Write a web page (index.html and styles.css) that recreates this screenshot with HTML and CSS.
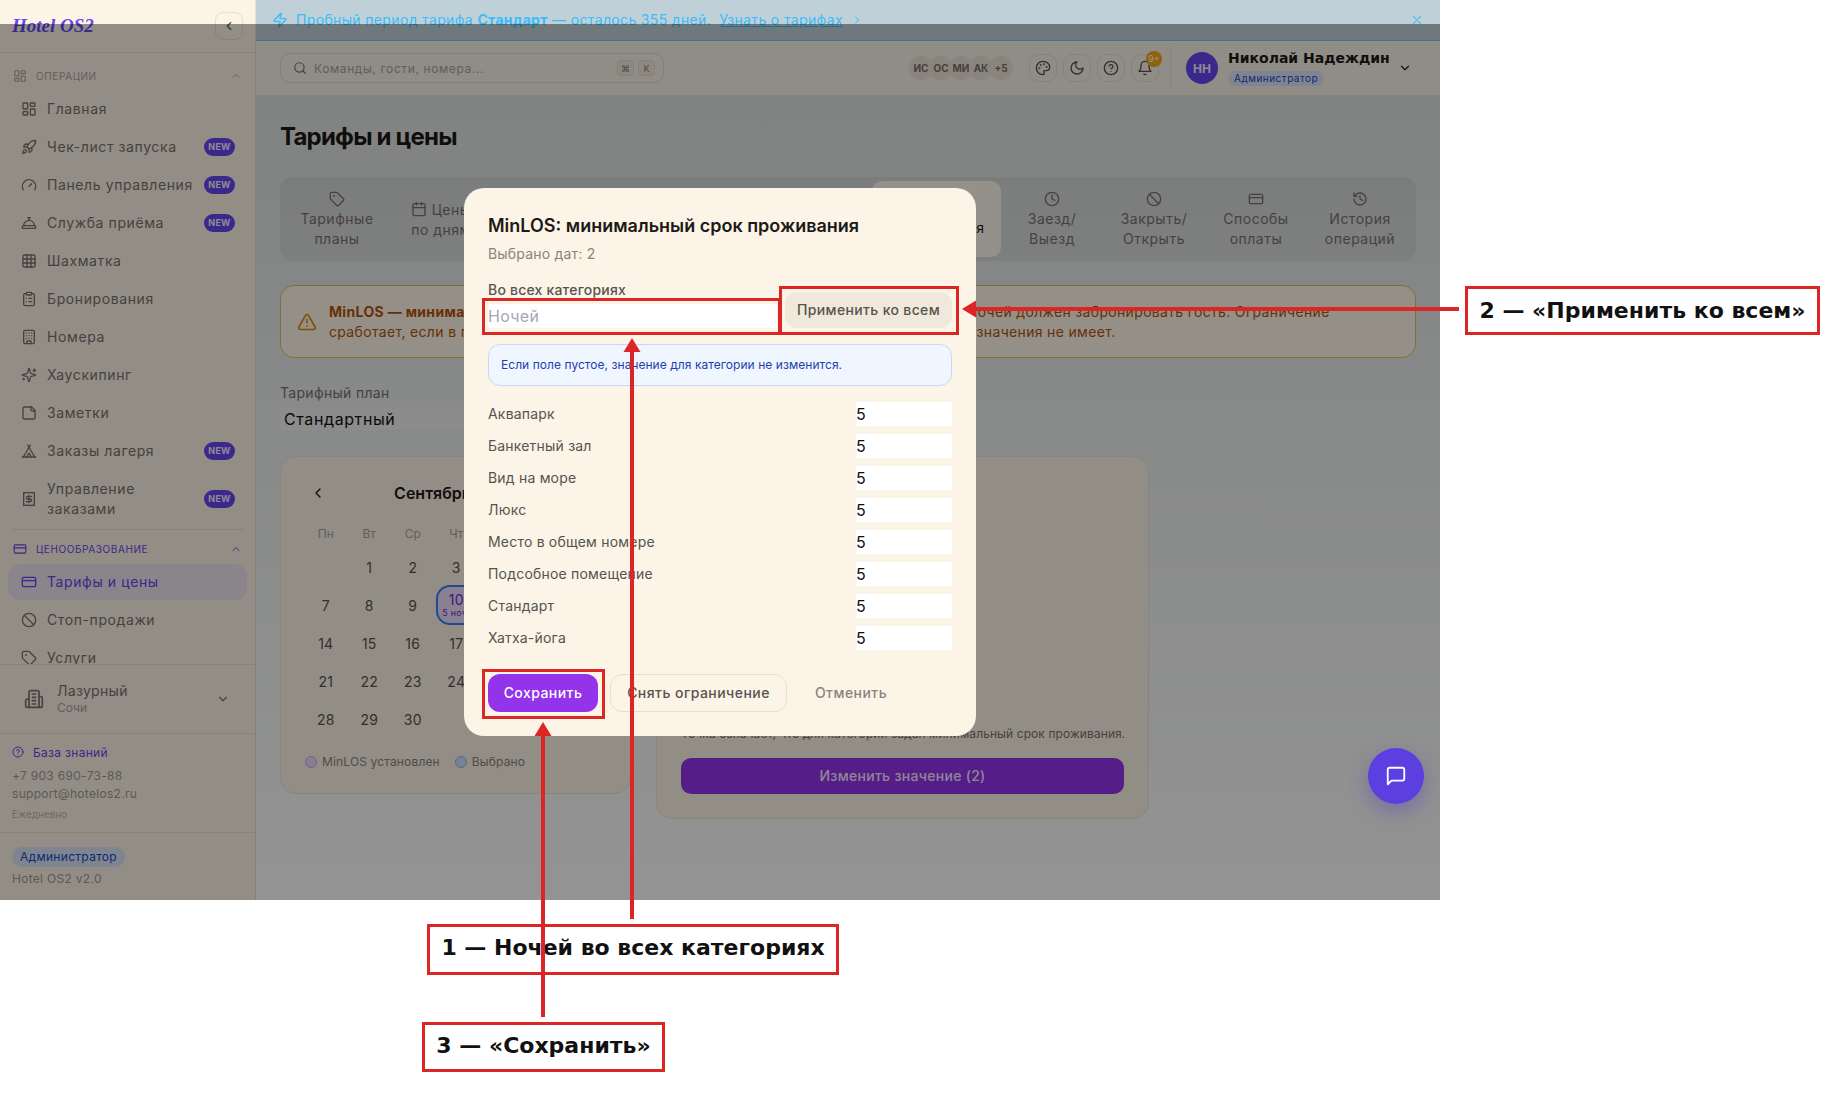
FILE: index.html
```html
<!DOCTYPE html>
<html lang="ru">
<head>
    <meta charset="UTF-8">
    <meta name="viewport" content="width=device-width, initial-scale=1.0">
    <title>Тарифы и цены</title>
    <link rel="stylesheet" href="styles.css">
</head>
<body>
    <svg class="sprite" xmlns="http://www.w3.org/2000/svg">
        <symbol id="i-dash" viewBox="0 0 24 24"><rect x="3" y="3" width="7" height="9" rx="1"/><rect x="14" y="3" width="7" height="5" rx="1"/><rect x="14" y="12" width="7" height="9" rx="1"/><rect x="3" y="16" width="7" height="5" rx="1"/></symbol>
        <symbol id="i-rocket" viewBox="0 0 24 24"><path d="M4.5 16.5c-1.5 1.26-2 5-2 5s3.74-.5 5-2c.71-.84.7-2.13-.09-2.91a2.18 2.18 0 0 0-2.91-.09z"/><path d="m12 15-3-3a22 22 0 0 1 2-3.95A12.88 12.88 0 0 1 22 2c0 2.72-.78 7.5-6 11a22.35 22.35 0 0 1-4 2z"/><path d="M9 12H4s.55-3.03 2-4c1.62-1.08 5 0 5 0"/><path d="M12 15v5s3.03-.55 4-2c1.08-1.62 0-5 0-5"/></symbol>
        <symbol id="i-gauge" viewBox="0 0 24 24"><path d="m12 14 4-4"/><path d="M3.34 19a10 10 0 1 1 17.32 0"/></symbol>
        <symbol id="i-bell-desk" viewBox="0 0 24 24"><path d="M3 20a1 1 0 0 1-1-1v-1a2 2 0 0 1 2-2h16a2 2 0 0 1 2 2v1a1 1 0 0 1-1 1Z"/><path d="M20 16a8 8 0 1 0-16 0"/><path d="M12 4v4"/><path d="M10 4h4"/></symbol>
        <symbol id="i-grid" viewBox="0 0 24 24"><rect x="3" y="3" width="18" height="18" rx="2"/><path d="M3 9h18M3 15h18M9 3v18M15 3v18"/></symbol>
        <symbol id="i-clipboard" viewBox="0 0 24 24"><rect x="8" y="2" width="8" height="4" rx="1"/><path d="M16 4h2a2 2 0 0 1 2 2v14a2 2 0 0 1-2 2H6a2 2 0 0 1-2-2V6a2 2 0 0 1 2-2h2"/><path d="M12 11h4M12 16h4M8 11h.01M8 16h.01"/></symbol>
        <symbol id="i-hotel" viewBox="0 0 24 24"><rect x="4" y="2" width="16" height="20" rx="2"/><path d="M9 22v-4h6v4"/><path d="M8 6h.01M16 6h.01M12 6h.01M12 10h.01M12 14h.01M16 10h.01M16 14h.01M8 10h.01M8 14h.01"/></symbol>
        <symbol id="i-sparkles" viewBox="0 0 24 24"><path d="M9.937 15.5A2 2 0 0 0 8.5 14.063l-6.135-1.582a.5.5 0 0 1 0-.962L8.5 9.936A2 2 0 0 0 9.937 8.5l1.582-6.135a.5.5 0 0 1 .963 0L14.063 8.5A2 2 0 0 0 15.5 9.937l6.135 1.581a.5.5 0 0 1 0 .964L15.5 14.063a2 2 0 0 0-1.437 1.437l-1.582 6.135a.5.5 0 0 1-.963 0z"/><path d="M20 3v4M22 5h-4M4 17v2M5 18H3"/></symbol>
        <symbol id="i-note" viewBox="0 0 24 24"><path d="M16 3H5a2 2 0 0 0-2 2v14a2 2 0 0 0 2 2h14a2 2 0 0 0 2-2V8Z"/><path d="M15 3v4a2 2 0 0 0 2 2h4"/></symbol>
        <symbol id="i-tent" viewBox="0 0 24 24"><path d="M3.5 21 14 3"/><path d="M20.5 21 10 3"/><path d="M15.5 21 12 15l-3.5 6"/><path d="M2 21h20"/></symbol>
        <symbol id="i-receipt" viewBox="0 0 24 24"><path d="M4 2v20l2-1 2 1 2-1 2 1 2-1 2 1 2-1 2 1V2l-2 1-2-1-2 1-2-1-2 1-2-1-2 1Z"/><path d="M16 8h-6a2 2 0 1 0 0 4h4a2 2 0 1 1 0 4H8"/><path d="M12 17.5v-11"/></symbol>
        <symbol id="i-card" viewBox="0 0 24 24"><rect x="2" y="5" width="20" height="14" rx="2"/><path d="M2 10h20"/></symbol>
        <symbol id="i-ban" viewBox="0 0 24 24"><circle cx="12" cy="12" r="10"/><path d="m4.9 4.9 14.2 14.2"/></symbol>
        <symbol id="i-tag" viewBox="0 0 24 24"><path d="M12.586 2.586A2 2 0 0 0 11.172 2H4a2 2 0 0 0-2 2v7.172a2 2 0 0 0 .586 1.414l8.704 8.704a2.426 2.426 0 0 0 3.42 0l6.58-6.58a2.426 2.426 0 0 0 0-3.42z"/><circle cx="7.5" cy="7.5" r=".5"/></symbol>
        <symbol id="i-building" viewBox="0 0 24 24"><path d="M6 22V4a2 2 0 0 1 2-2h8a2 2 0 0 1 2 2v18Z"/><path d="M6 12H4a2 2 0 0 0-2 2v6a2 2 0 0 0 2 2h2"/><path d="M18 9h2a2 2 0 0 1 2 2v9a2 2 0 0 1-2 2h-2"/><path d="M10 6h4M10 10h4M10 14h4M10 18h4"/></symbol>
        <symbol id="i-help" viewBox="0 0 24 24"><circle cx="12" cy="12" r="10"/><path d="M9.09 9a3 3 0 0 1 5.83 1c0 2-3 3-3 3"/><path d="M12 17h.01"/></symbol>
        <symbol id="i-palette" viewBox="0 0 24 24"><path d="M12 22a1 1 0 0 1 0-20 10 9 0 0 1 10 9 5 5 0 0 1-5 5h-2.25a1.75 1.75 0 0 0-1.4 2.8l.3.4a1.75 1.75 0 0 1-1.4 2.8z"/><circle cx="13.5" cy="6.5" r=".5"/><circle cx="17.5" cy="10.5" r=".5"/><circle cx="6.5" cy="12.5" r=".5"/><circle cx="8.5" cy="7.5" r=".5"/></symbol>
        <symbol id="i-moon" viewBox="0 0 24 24"><path d="M12 3a6 6 0 0 0 9 9 9 9 0 1 1-9-9Z"/></symbol>
        <symbol id="i-bell" viewBox="0 0 24 24"><path d="M6 8a6 6 0 0 1 12 0c0 7 3 9 3 9H3s3-2 3-9"/><path d="M10.3 21a1.94 1.94 0 0 0 3.4 0"/></symbol>
        <symbol id="i-search" viewBox="0 0 24 24"><circle cx="11" cy="11" r="8"/><path d="m21 21-4.3-4.3"/></symbol>
        <symbol id="i-zap" viewBox="0 0 24 24"><path d="M4 14a1 1 0 0 1-.78-1.63l9.9-10.2a.5.5 0 0 1 .86.46l-1.92 6.02A1 1 0 0 0 13 10h7a1 1 0 0 1 .78 1.63l-9.9 10.2a.5.5 0 0 1-.86-.46l1.92-6.02A1 1 0 0 0 11 14z"/></symbol>
        <symbol id="i-alert" viewBox="0 0 24 24"><path d="m21.73 18-8-14a2 2 0 0 0-3.48 0l-8 14A2 2 0 0 0 4 21h16a2 2 0 0 0 1.73-3"/><path d="M12 9v4"/><path d="M12 17h.01"/></symbol>
        <symbol id="i-clock" viewBox="0 0 24 24"><circle cx="12" cy="12" r="10"/><path d="M12 6v6l4 2"/></symbol>
        <symbol id="i-history" viewBox="0 0 24 24"><path d="M3 12a9 9 0 1 0 9-9 9.75 9.75 0 0 0-6.74 2.74L3 8"/><path d="M3 3v5h5"/><path d="M12 7v5l4 2"/></symbol>
        <symbol id="i-calendar" viewBox="0 0 24 24"><path d="M8 2v4M16 2v4"/><rect x="3" y="4" width="18" height="18" rx="2"/><path d="M3 10h18"/></symbol>
        <symbol id="i-chat" viewBox="0 0 24 24"><path d="M21 15a2 2 0 0 1-2 2H7l-4 4V5a2 2 0 0 1 2-2h14a2 2 0 0 1 2 2z"/></symbol>
        <symbol id="i-left" viewBox="0 0 24 24"><path d="m15 18-6-6 6-6"/></symbol>
        <symbol id="i-right" viewBox="0 0 24 24"><path d="m9 18 6-6-6-6"/></symbol>
        <symbol id="i-up" viewBox="0 0 24 24"><path d="m18 15-6-6-6 6"/></symbol>
        <symbol id="i-down" viewBox="0 0 24 24"><path d="m6 9 6 6 6-6"/></symbol>
        <symbol id="i-x" viewBox="0 0 24 24"><path d="M18 6 6 18M6 6l12 12"/></symbol>
    </svg>

    <div class="shot">
        <aside class="sidebar">
            <div class="brand">
                <span class="brand-name">Hotel OS2</span>
                <button class="collapse-btn"><svg class="ico ico-14"><use href="#i-left"/></svg></button>
            </div>

            <nav class="nav">
                <div class="group-head">
                    <svg class="ico ico-14"><use href="#i-dash"/></svg>
                    <span>ОПЕРАЦИИ</span>
                    <svg class="ico ico-12 group-chev"><use href="#i-up"/></svg>
                </div>
                <a class="nav-item"><svg class="ico"><use href="#i-dash"/></svg><span class="nav-text">Главная</span></a>
                <a class="nav-item"><svg class="ico"><use href="#i-rocket"/></svg><span class="nav-text">Чек-лист запуска</span><b class="new">NEW</b></a>
                <a class="nav-item"><svg class="ico"><use href="#i-gauge"/></svg><span class="nav-text">Панель управления</span><b class="new">NEW</b></a>
                <a class="nav-item"><svg class="ico"><use href="#i-bell-desk"/></svg><span class="nav-text">Служба приёма</span><b class="new">NEW</b></a>
                <a class="nav-item"><svg class="ico"><use href="#i-grid"/></svg><span class="nav-text">Шахматка</span></a>
                <a class="nav-item"><svg class="ico"><use href="#i-clipboard"/></svg><span class="nav-text">Бронирования</span></a>
                <a class="nav-item"><svg class="ico"><use href="#i-hotel"/></svg><span class="nav-text">Номера</span></a>
                <a class="nav-item"><svg class="ico"><use href="#i-sparkles"/></svg><span class="nav-text">Хаускипинг</span></a>
                <a class="nav-item"><svg class="ico"><use href="#i-note"/></svg><span class="nav-text">Заметки</span></a>
                <a class="nav-item"><svg class="ico"><use href="#i-tent"/></svg><span class="nav-text">Заказы лагеря</span><b class="new">NEW</b></a>
                <a class="nav-item nav-item-tall"><svg class="ico"><use href="#i-receipt"/></svg><span class="nav-text">Управление<br>заказами</span><b class="new">NEW</b></a>

                <div class="group-head group-head-active">
                    <svg class="ico ico-14"><use href="#i-card"/></svg>
                    <span>ЦЕНООБРАЗОВАНИЕ</span>
                    <svg class="ico ico-12 group-chev"><use href="#i-up"/></svg>
                </div>
                <a class="nav-item nav-item-active"><svg class="ico"><use href="#i-card"/></svg><span class="nav-text">Тарифы и цены</span></a>
                <a class="nav-item"><svg class="ico"><use href="#i-ban"/></svg><span class="nav-text">Стоп-продажи</span></a>
                <a class="nav-item"><svg class="ico"><use href="#i-tag"/></svg><span class="nav-text">Услуги</span></a>
            </nav>

            <div class="property">
                <svg class="ico ico-20"><use href="#i-building"/></svg>
                <div class="property-text">
                    <div class="property-name">Лазурный</div>
                    <div class="property-city">Сочи</div>
                </div>
                <svg class="ico ico-14"><use href="#i-down"/></svg>
            </div>

            <div class="support">
                <div class="support-link"><svg class="ico ico-12"><use href="#i-help"/></svg>База знаний</div>
                <div class="support-line">+7 903 690-73-88</div>
                <div class="support-line">support@hotelos2.ru</div>
                <div class="support-small">Ежедневно</div>
            </div>

            <div class="side-foot">
                <span class="role-pill">Администратор</span>
                <div class="version">Hotel OS2 v2.0</div>
            </div>
        </aside>

        <div class="workspace">
            <div class="banner">
                <svg class="ico"><use href="#i-zap"/></svg>
                <span>Пробный период тарифа <b>Стандарт</b> — осталось 355 дней.</span>
                <a class="banner-link">Узнать о тарифах</a>
                <svg class="ico ico-12"><use href="#i-right"/></svg>
                <svg class="ico ico-14 banner-close"><use href="#i-x"/></svg>
            </div>

            <header class="topbar">
                <div class="search">
                    <svg class="ico ico-14"><use href="#i-search"/></svg>
                    <span class="search-text">Команды, гости, номера...</span>
                    <kbd>⌘</kbd><kbd>K</kbd>
                </div>
                <div class="people">
                    <span class="person">ИС</span><span class="person">ОС</span><span class="person">МИ</span><span class="person">АК</span><span class="person">+5</span>
                </div>
                <div class="tools">
                    <button class="tool"><svg class="ico"><use href="#i-palette"/></svg></button>
                    <button class="tool"><svg class="ico"><use href="#i-moon"/></svg></button>
                    <button class="tool"><svg class="ico"><use href="#i-help"/></svg></button>
                    <button class="tool"><svg class="ico"><use href="#i-bell"/></svg><span class="tool-badge">9+</span></button>
                </div>
                <div class="user">
                    <span class="user-avatar">НН</span>
                    <div class="user-text">
                        <div class="user-name">Николай Надеждин</div>
                        <span class="user-role">Администратор</span>
                    </div>
                    <svg class="ico ico-14"><use href="#i-down"/></svg>
                </div>
            </header>

            <main class="content">
                <h1>Тарифы и цены</h1>

                <div class="tabs">
                    <div class="tab tab-first"><svg class="ico"><use href="#i-tag"/></svg>Тарифные<br>планы</div>
                    <div class="tab tab-inline"><span><svg class="ico"><use href="#i-calendar"/></svg> Цены<br>по дням</span></div>
                    <div class="tab-gap"></div>
                    <div class="tab tab-active"><svg class="ico"><use href="#i-clock"/></svg>Ограничения</div>
                    <div class="tab"><svg class="ico"><use href="#i-clock"/></svg>Заезд/<br>Выезд</div>
                    <div class="tab"><svg class="ico"><use href="#i-ban"/></svg>Закрыть/<br>Открыть</div>
                    <div class="tab"><svg class="ico"><use href="#i-card"/></svg>Способы<br>оплаты</div>
                    <div class="tab tab-last"><svg class="ico"><use href="#i-history"/></svg>История<br>операций</div>
                </div>

                <div class="alert">
                    <svg class="ico ico-20"><use href="#i-alert"/></svg>
                    <p><b>MinLOS — минимальный срок проживания.</b> Говорит, сколько минимум подряд идущих ночей должен забронировать гость. Ограничение<br>сработает, если в период проживания попадает выбранная дата заезда, остальные даты значения не имеет.</p>
                </div>

                <label class="plan-label">Тарифный план</label>
                <div class="plan-select">Стандартный</div>

                <div class="panels">
                    <section class="card calendar">
                        <div class="cal-head">
                            <svg class="ico"><use href="#i-left"/></svg>
                            <span>Сентябрь 2026</span>
                            <svg class="ico"><use href="#i-right"/></svg>
                        </div>
                        <div class="cal-grid">
                            <span class="wd">Пн</span><span class="wd">Вт</span><span class="wd">Ср</span><span class="wd">Чт</span><span class="wd">Пт</span><span class="wd">Сб</span><span class="wd">Вс</span>
                            <span class="day"></span><span class="day">1</span><span class="day">2</span><span class="day">3</span><span class="day">4</span><span class="day">5</span><span class="day">6</span>
                            <span class="day">7</span><span class="day">8</span><span class="day">9</span><span class="day day-set">10<small>5 ноч.</small></span><span class="day">11</span><span class="day">12</span><span class="day">13</span>
                            <span class="day">14</span><span class="day">15</span><span class="day">16</span><span class="day">17</span><span class="day">18</span><span class="day">19</span><span class="day">20</span>
                            <span class="day">21</span><span class="day">22</span><span class="day">23</span><span class="day">24</span><span class="day">25</span><span class="day">26</span><span class="day">27</span>
                            <span class="day">28</span><span class="day">29</span><span class="day">30</span>
                        </div>
                        <div class="legend">
                            <span class="dot dot-purple"></span><span>MinLOS установлен</span>
                            <span class="dot dot-blue"></span><span>Выбрано</span>
                        </div>
                    </section>

                    <section class="card side-panel">
                        <p class="hint">Точка означает, что для категории задан минимальный срок проживания.</p>
                        <button class="change-btn">Изменить значение (2)</button>
                    </section>
                </div>
            </main>
        </div>

        <div class="overlay">
            <div class="modal">
                <h2>MinLOS: минимальный срок проживания</h2>
                <p class="modal-sub">Выбрано дат: 2</p>

                <div class="apply-row">
                    <div class="apply-field">
                        <label>Во всех категориях</label>
                        <input class="num" type="number" placeholder="Ночей">
                    </div>
                    <button class="apply-btn">Применить ко всем</button>
                </div>

                <div class="info">Если поле пустое, значение для категории не изменится.</div>

                <div class="cat-list">
                    <div class="cat"><span>Аквапарк</span><input class="num" type="number" value="5"></div>
                    <div class="cat"><span>Банкетный зал</span><input class="num" type="number" value="5"></div>
                    <div class="cat"><span>Вид на море</span><input class="num" type="number" value="5"></div>
                    <div class="cat"><span>Люкс</span><input class="num" type="number" value="5"></div>
                    <div class="cat"><span>Место в общем номере</span><input class="num" type="number" value="5"></div>
                    <div class="cat"><span>Подсобное помещение</span><input class="num" type="number" value="5"></div>
                    <div class="cat"><span>Стандарт</span><input class="num" type="number" value="5"></div>
                    <div class="cat"><span>Хатха-йога</span><input class="num" type="number" value="5"></div>
                </div>

                <div class="modal-actions">
                    <button class="btn-save">Сохранить</button>
                    <button class="btn-clear">Снять ограничение</button>
                    <button class="btn-cancel">Отменить</button>
                </div>
            </div>
        </div>

        <button class="chat-fab"><svg class="ico ico-22"><use href="#i-chat"/></svg></button>
    </div>

    <!-- пометки поверх скриншота -->
    <div class="mark mark-input"></div>
    <div class="mark mark-apply"></div>
    <div class="mark mark-save"></div>
    <div class="note note-1">1 — Ночей во всех категориях</div>
    <div class="note note-2">2 — «Применить ко всем»</div>
    <div class="note note-3">3 — «Сохранить»</div>
    <svg class="arrows" width="1842" height="1095" viewBox="0 0 1842 1095" xmlns="http://www.w3.org/2000/svg">
        <path d="M630 919V352h4v567z"/><path d="M632 338l8.5 14h-17z"/>
        <path d="M541 1017V736h4v281z"/><path d="M543 722l8.5 14h-17z"/>
        <path d="M1459 307H976v4h483z"/><path d="M962 309l14-8.5v17z"/>
    </svg>
</body>
</html>
```

FILE: styles.css
```css
* {
    box-sizing: border-box;
}
body {
    margin: 0;
    height: 1095px;
    position: relative;
    overflow: hidden;
    background-color: #fff;
    font-family: Inter, "Noto Sans", sans-serif;
    font-size: 14px;
    color: #1c1917;
}
button {
    font-family: inherit;
    cursor: pointer;
}
.sprite {
    display: none;
}
.ico {
    width: 16px;
    height: 16px;
    flex: none;
    fill: none;
    stroke: currentColor;
    stroke-width: 2;
    stroke-linecap: round;
    stroke-linejoin: round;
}
.ico-12 { width: 12px; height: 12px; }
.ico-14 { width: 14px; height: 14px; }
.ico-20 { width: 20px; height: 20px; }
.ico-22 { width: 22px; height: 22px; }

.shot {
    width: 1440px;
    height: 900px;
    position: relative;
    overflow: hidden;
    display: flex;
}

/* боковая панель */
.sidebar {
    width: 256px;
    flex: none;
    display: flex;
    flex-direction: column;
    background-color: #fbf4e7;
    border-right: 1px solid #e8dfd0;
    color: #78716c;
}
.brand {
    height: 53px;
    flex: none;
    display: flex;
    align-items: center;
    justify-content: space-between;
    padding: 0 12px;
    border-bottom: 1px solid #e8dfd0;
}
.brand-name {
    font-family: "Liberation Serif", serif;
    font-weight: bold;
    font-style: italic;
    font-size: 19px;
    color: #6746f0;
}
.collapse-btn {
    width: 28px;
    height: 28px;
    display: flex;
    align-items: center;
    justify-content: center;
    padding: 0;
    background: transparent;
    color: #57534e;
    border: 1px solid #e8dfd0;
    border-radius: 8px;
}
.nav {
    flex: 1;
    min-height: 0;
    overflow: hidden;
    padding: 11px 8px 0;
}
.group-head {
    height: 24px;
    margin-bottom: 3px;
    display: flex;
    align-items: center;
    gap: 9px;
    padding: 0 5px;
    font-size: 10px;
    letter-spacing: 0.6px;
    color: #a8a29e;
}
.group-chev {
    margin-left: auto;
}
.group-head-active {
    margin-top: 10px;
    color: #6746f0;
    position: relative;
}
.group-head-active::before {
    content: "";
    position: absolute;
    left: 4px;
    right: 3px;
    top: -8px;
    border-top: 1px solid #e8dfd0;
}
.nav-item {
    min-height: 36px;
    margin-bottom: 2px;
    display: flex;
    align-items: center;
    gap: 10px;
    padding: 0 12px 0 13px;
    border-radius: 12px;
    line-height: 20px;
    color: #78716c;
}
.nav-text {
    letter-spacing: 0.6px;
}
.nav-item-tall {
    min-height: 56px;
}
.nav-item-active {
    background-color: #ece5ee;
    color: #6746f0;
}
.new {
    margin-left: auto;
    width: 31px;
    height: 18px;
    display: flex;
    align-items: center;
    justify-content: center;
    border-radius: 9px;
    background-color: #6746f0;
    color: #f2eefe;
    font-size: 9px;
    letter-spacing: 0.2px;
}
.property {
    height: 69px;
    flex: none;
    display: flex;
    align-items: center;
    padding: 0 25px 0 24px;
    border-top: 1px solid #e8dfd0;
    color: #78716c;
}
.property-text {
    flex: 1;
    margin-left: 13px;
}
.property-name {
    font-size: 14px;
    line-height: 18px;
    letter-spacing: 0.3px;
}
.property-city {
    font-size: 12px;
    line-height: 16px;
    color: #a8a29e;
}
.support {
    height: 99px;
    flex: none;
    padding: 9px 12px 0;
    border-top: 1px solid #e8dfd0;
    font-size: 12px;
    color: #a09a92;
}
.support-link {
    display: flex;
    align-items: center;
    gap: 9px;
    height: 18px;
    color: #6746f0;
    letter-spacing: 0.3px;
}
.support-line {
    line-height: 18px;
    letter-spacing: 0.3px;
}
.support-link + .support-line {
    margin-top: 6px;
}
.support-small {
    margin-top: 3px;
    font-size: 10px;
    line-height: 16px;
    color: #bdb6ab;
}
.side-foot {
    height: 68px;
    flex: none;
    padding: 14px 12px 0;
    border-top: 1px solid #e8dfd0;
    font-size: 12px;
}
.role-pill {
    display: inline-block;
    height: 20px;
    padding: 0 8px;
    line-height: 20px;
    border-radius: 10px;
    background-color: #dbe6f8;
    color: #2246c4;
    letter-spacing: 0.3px;
}
.version {
    margin-top: 3px;
    line-height: 18px;
    color: #a09a92;
    letter-spacing: 0.3px;
}

/* правая часть */
.workspace {
    flex: 1;
    min-width: 0;
    display: flex;
    flex-direction: column;
    background: linear-gradient(180deg, #dadede 0%, #fefefe 100%);
}
.banner {
    height: 41px;
    flex: none;
    display: flex;
    align-items: center;
    gap: 8px;
    padding: 0 16px 1px 16px;
    background-color: #c0d0d8;
    border-bottom: 1px solid #7cc3e6;
    color: #38bdf8;
    font-size: 14px;
    letter-spacing: 0.35px;
}
.banner-link {
    text-decoration: underline;
}
.banner-close {
    margin-left: auto;
    opacity: 0.8;
}
.topbar {
    height: 55px;
    flex: none;
    display: flex;
    align-items: center;
    padding: 0 24px;
    background-color: #f9f2e7;
    border-bottom: 1px solid #ece3d4;
}
.search {
    width: 384px;
    height: 30px;
    display: flex;
    align-items: center;
    padding: 0 8px 0 12px;
    border: 1px solid #e0d8ca;
    border-radius: 10px;
    color: #78716c;
}
.search-text {
    flex: 1;
    margin-left: 7px;
    font-size: 12px;
    letter-spacing: 0.6px;
    color: #a8a29e;
}
kbd {
    width: 17px;
    height: 16px;
    margin-left: 4px;
    display: flex;
    align-items: center;
    justify-content: center;
    font-family: inherit;
    font-size: 9px;
    border: 1px solid #e8dfd0;
    border-radius: 4px;
    background-color: #f3ecdf;
    color: #8a847b;
}
.people {
    margin-left: auto;
    display: flex;
    margin-right: 16px;
}
.person {
    width: 24px;
    height: 24px;
    margin-left: -4px;
    display: flex;
    align-items: center;
    justify-content: center;
    border-radius: 50%;
    background-color: #ece4d6;
    color: #78716c;
    font-size: 10px;
    font-weight: 700;
    overflow: hidden;
}
.tools {
    display: flex;
    gap: 6px;
    height: 45px;
    align-items: center;
    padding-right: 11px;
    border-right: 1px solid #ece3d4;
}
.tool {
    width: 28px;
    height: 28px;
    position: relative;
    display: flex;
    align-items: center;
    justify-content: center;
    padding: 0;
    background: transparent;
    color: #57534e;
    border: 1px solid #e8dfd0;
    border-radius: 10px;
}
.tool-badge {
    position: absolute;
    top: -4px;
    right: -4px;
    width: 16px;
    height: 16px;
    border-radius: 50%;
    background-color: #f9a513;
    color: #fff;
    font-size: 9px;
    line-height: 16px;
    text-align: center;
}
.user {
    width: 230px;
    flex: none;
    display: flex;
    align-items: center;
    margin-left: 15px;
    padding-right: 4px;
}
.user-avatar {
    width: 32px;
    height: 32px;
    display: flex;
    align-items: center;
    justify-content: center;
    border-radius: 50%;
    background-color: #6746f0;
    color: #f0ecfd;
    font-size: 12px;
    font-weight: 700;
}
.user-text {
    margin-left: 10px;
    flex: 1;
}
.user-name {
    font-family: "DejaVu Sans", sans-serif;
    font-size: 14px;
    font-weight: 700;
    line-height: 16px;
    margin-bottom: 2px;
    color: #1c1917;
}
.user-role {
    display: inline-block;
    height: 15px;
    padding: 0 6px;
    line-height: 15px;
    font-size: 10px;
    letter-spacing: 0.5px;
    border-radius: 8px;
    background-color: #dbe6f8;
    color: #2246c4;
}
.content {
    flex: 1;
    padding: 25px 24px 0;
    min-height: 0;
}
h1 {
    margin: 0 0 24px;
    font-size: 24px;
    line-height: 32px;
    font-weight: 700;
    letter-spacing: -0.8px;
    color: #1c1917;
}
.tabs {
    height: 84px;
    display: flex;
    padding: 4px 3px 4px 4px;
    border-radius: 12px;
    background-color: rgba(0, 0, 0, 0.05);
    color: #78716c;
}
.tab {
    width: 102px;
    flex: none;
    display: flex;
    flex-direction: column;
    align-items: center;
    justify-content: center;
    text-align: center;
    line-height: 20px;
    letter-spacing: 0.5px;
    gap: 2px;
    padding-top: 2px;
}
.tab-first {
    width: 106px;
}
.tab-inline .ico {
    vertical-align: -2px;
}
.tab-gap {
    flex: 1;
}
.tab-active {
    width: 129px;
    border-radius: 10px;
    background-color: #fff8ee;
    color: #1c1917;
    justify-content: flex-start;
    padding-top: 19px;
}
.tab-last {
    width: 106px;
}
.alert {
    height: 73px;
    margin-top: 24px;
    display: flex;
    align-items: center;
    gap: 12px;
    padding: 0 16px;
    border: 1px solid #e0c060;
    border-radius: 14px;
    background-color: #fff9e8;
    color: #b45309;
}
.alert .ico {
    color: #e08a0a;
}
.alert p {
    margin: 0;
    line-height: 20px;
    letter-spacing: 0.33px;
    white-space: nowrap;
}
.plan-label {
    display: block;
    margin-top: 25px;
    line-height: 20px;
    letter-spacing: 0.3px;
    color: #78716c;
}
.plan-select {
    width: 400px;
    height: 22px;
    margin-top: 5px;
    padding: 0 4px;
    font-size: 16px;
    line-height: 22px;
    letter-spacing: 0.6px;
    background-color: #f2f2f2;
    color: #111;
}
.panels {
    margin-top: 26px;
    display: flex;
    align-items: flex-start;
    gap: 25px;
}
.card {
    background-color: #fbf4e7;
    border: 1px solid #eee4d2;
    border-radius: 16px;
    padding: 24px;
}
.calendar {
    width: 351px;
    height: 338px;
}
.cal-head {
    height: 24px;
    display: flex;
    align-items: center;
    justify-content: space-between;
    padding: 0 6px 0 5px;
    font-size: 16px;
    font-weight: 600;
}
.cal-grid {
    margin-top: 19px;
    display: grid;
    grid-template-columns: repeat(7, 41.5px);
    grid-template-rows: 23px repeat(5, 36px);
    gap: 2px;
    text-align: center;
}
.wd {
    height: 20px;
    font-size: 12px;
    line-height: 20px;
    color: #a8a29e;
}
.day {
    justify-self: center;
    width: 36px;
    height: 36px;
    display: flex;
    flex-direction: column;
    align-items: center;
    justify-content: center;
    color: #57534e;
    letter-spacing: 0.2px;
}
.day-set {
    background-color: #ecdffb;
    border-radius: 12px;
    box-shadow: 0 0 0 2px #3b82f6;
    color: #7e22ce;
    line-height: 16px;
    white-space: nowrap;
}
.day-set small {
    font-size: 9px;
    line-height: 10px;
}
.legend {
    margin-top: 17px;
    display: flex;
    align-items: center;
    gap: 5px;
    font-size: 12px;
    letter-spacing: 0.15px;
    color: #8a847b;
}
.dot {
    width: 12px;
    height: 12px;
    border-radius: 50%;
}
.dot + span + .dot {
    margin-left: 10px;
}
.dot-purple {
    background-color: #ead9f8;
    border: 1px solid #c9a8ee;
}
.dot-blue {
    background-color: #cfe0fb;
    border: 1px solid #93b8f5;
}
.side-panel {
    width: 493px;
    height: 363px;
    display: flex;
    flex-direction: column;
    justify-content: flex-end;
}
.hint {
    margin: 0 0 16px;
    font-size: 12px;
    line-height: 16px;
    letter-spacing: 0.09px;
    color: #78716c;
    white-space: nowrap;
}
.change-btn {
    height: 36px;
    padding-bottom: 3px;
    border: none;
    border-radius: 10px;
    background-color: #9333ea;
    color: #f3e8ff;
    font-size: 14px;
    font-weight: 500;
    letter-spacing: 0.3px;
}

/* затемнение и окно */
.overlay {
    position: absolute;
    left: 0;
    right: 0;
    top: 24px;
    bottom: 0;
    display: flex;
    align-items: center;
    justify-content: center;
    background-color: rgba(0, 0, 0, 0.42);
}
.modal {
    width: 512px;
    height: 548px;
    padding: 24px;
    border-radius: 20px;
    background-color: #fbf4e7;
    color: #57534e;
}
.modal h2 {
    margin: 0;
    font-size: 18px;
    line-height: 28px;
    font-weight: 600;
    color: #1c1917;
}
.modal-sub {
    margin: 4px 0 0;
    line-height: 20px;
    font-size: 14px;
    letter-spacing: 0.2px;
    color: #8a847b;
}
.apply-row {
    margin-top: 16px;
    display: flex;
    align-items: flex-end;
    gap: 8px;
}
.apply-field {
    flex: 1;
}
.apply-field label {
    display: block;
    font-size: 14px;
    line-height: 20px;
    font-weight: 500;
    letter-spacing: 0.2px;
    margin-bottom: 4px;
}
.num {
    display: block;
    width: 100%;
    height: 24px;
    padding: 0;
    border: none;
    border-radius: 0;
    outline: none;
    background-color: #fff;
    font-family: inherit;
    font-size: 16px;
    color: #111;
}
.num::placeholder {
    color: #a3a9b5;
    letter-spacing: 0.3px;
}
.apply-btn {
    width: 167px;
    height: 36px;
    padding-bottom: 3px;
    border: none;
    border-radius: 12px;
    background-color: #f0e8da;
    color: #57534e;
    font-size: 14px;
    font-weight: 500;
    letter-spacing: 0.35px;
}
.info {
    height: 42px;
    margin-top: 16px;
    padding: 0 12px 2px;
    display: flex;
    align-items: center;
    border: 1px solid #bfdbfe;
    border-radius: 12px;
    background-color: #eff6ff;
    color: #1e40af;
    font-size: 12px;
    letter-spacing: 0.05px;
}
.cat-list {
    margin-top: 16px;
    display: flex;
    flex-direction: column;
    gap: 8px;
}
.cat {
    display: flex;
    align-items: center;
    justify-content: space-between;
    letter-spacing: 0.2px;
}
.cat span {
    margin-bottom: 2px;
}
.cat .num {
    width: 96px;
}
.modal-actions {
    margin-top: 24px;
    display: flex;
    gap: 12px;
}
.modal-actions button {
    height: 38px;
    padding-bottom: 3px;
    font-size: 14px;
    font-weight: 500;
    letter-spacing: 0.45px;
}
.btn-save {
    width: 110px;
    border: none;
    border-radius: 12px;
    background-color: #9333ea;
    color: #fff;
}
.btn-clear {
    width: 177px;
    border: 1px solid #eadfcd;
    border-radius: 12px;
    background: transparent;
    color: #57534e;
}
.btn-cancel {
    width: 104px;
    border: none;
    background: transparent;
    color: #8a847b;
}
.chat-fab {
    position: absolute;
    left: 1368px;
    top: 748px;
    width: 56px;
    height: 56px;
    display: flex;
    align-items: center;
    justify-content: center;
    padding: 0;
    border: none;
    border-radius: 50%;
    background-color: #5b3fe0;
    color: #fff;
    box-shadow: 0 8px 20px rgba(70, 50, 200, 0.35);
}

/* пометки */
.mark, .note {
    position: absolute;
    border: 3px solid #dc2626;
}
.mark-input { left: 482px; top: 298px; width: 299px; height: 37px; }
.mark-apply { left: 779px; top: 286px; width: 180px; height: 49px; }
.mark-save { left: 482px; top: 669px; width: 123px; height: 50px; }
.note {
    display: flex;
    align-items: center;
    justify-content: center;
    background-color: #fff;
    font-family: "DejaVu Sans", sans-serif;
    font-size: 22px;
    font-weight: 700;
    color: #111;
    white-space: nowrap;
}
.note-1 { left: 427px; top: 924px; width: 412px; height: 51px; padding-bottom: 4px; }
.note-2 { left: 1465px; top: 286px; width: 355px; height: 49px; }
.note-3 { left: 422px; top: 1022px; width: 243px; height: 50px; padding-bottom: 4px; }
.arrows {
    position: absolute;
    left: 0;
    top: 0;
    fill: #dc2626;
}
```
